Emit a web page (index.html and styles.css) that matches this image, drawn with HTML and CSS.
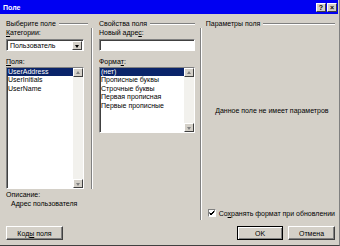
FILE: index.html
```html
<!DOCTYPE html>
<html lang="ru">
<head>
<meta charset="UTF-8">
<title>Поле</title>
<link rel="stylesheet" href="styles.css">
</head>
<body>
<div class="window">
  <div class="titlebar">
    <span class="title">Поле</span>
    <span class="tbtn">?</span>
    <span class="tbtn">×</span>
  </div>
  <div class="panes">
    <div class="pane pane-fields">
      <div class="group">Выберите поле</div>
      <div class="pick">
        <div class="label"><u>К</u>атегории:</div>
        <div class="select"><span class="value">Пользователь</span><span class="drop"></span></div>
        <div class="label spaced"><u>П</u>оля:</div>
        <div class="listbox fields">
          <ul class="items">
            <li class="sel">UserAddress</li>
            <li>UserInitials</li>
            <li>UserName</li>
          </ul>
          <div class="scroll"><span class="arrow up"></span><span class="track"></span><span class="arrow down"></span></div>
        </div>
      </div>
      <div class="label">Описание:</div>
      <div class="desc">Адрес пользователя</div>
      <div class="buttons"><button class="btn codes">Код<u>ы</u> поля</button></div>
    </div>

    <div class="pane pane-props">
      <div class="group">Свойства поля</div>
      <div class="label">Новый адре<u>с</u>:</div>
      <div class="input"></div>
      <div class="label spaced">Форма<u>т</u>:</div>
      <div class="listbox formats">
        <ul class="items">
          <li class="sel">(нет)</li>
          <li>Прописные буквы</li>
          <li>Строчные буквы</li>
          <li>Первая прописная</li>
          <li>Первые прописные</li>
        </ul>
        <div class="scroll"><span class="arrow up"></span><span class="track"></span><span class="arrow down"></span></div>
      </div>
    </div>

    <div class="pane pane-params">
      <div class="group">Параметры поля</div>
      <div class="params">
        <div class="empty">Данное поле не имеет параметров</div>
        <label class="check"><span class="box">
          <svg width="6" height="6" viewBox="0 0 6 6"><path d="M0.5 2.5 L2 4 L5.5 0.5 M0.5 3.5 L2 5 L5.5 1.5" stroke="#000" stroke-width="1" fill="none"/></svg>
        </span><span>Со<u>х</u>ранять формат при обновлении</span></label>
      </div>
      <div class="buttons right">
        <button class="btn default">OK</button>
        <button class="btn cancel">Отмена</button>
      </div>
    </div>
  </div>
</div>
</body>
</html>
```

FILE: styles.css
```css
* {
    box-sizing: border-box;
}

body {
    margin: 0;
    font-family: "Liberation Sans", Arial, sans-serif;
    font-size: 7px;
    color: #000;
}

.window {
    width: 340px;
    height: 246px;
    background: #d4d0c8;
    border-right: 1px solid #808080;
    border-bottom: 1px solid #404040;
    display: flex;
    flex-direction: column;
}

.titlebar {
    height: 14px;
    margin-right: 1px;
    background: #0000f2;
    display: flex;
    align-items: center;
    gap: 1px;
    padding: 0 1px 0 3px;
}

.title {
    flex: 1;
    color: #fff;
    font-weight: bold;
    font-size: 7px;
}

.tbtn {
    width: 10px;
    height: 9px;
    background: #d4d0c8;
    border: 1px solid;
    border-color: #fff #404040 #404040 #fff;
    font-weight: bold;
    font-size: 7px;
    line-height: 7px;
    text-align: center;
}

.panes {
    flex: 1;
    display: flex;
    padding: 5px 4px 5px 6px;
}

.pane {
    display: flex;
    flex-direction: column;
}

.pane-fields { width: 87px; }
.pane-props { width: 98px; margin-left: 6px; }
.pane-params { flex: 1; margin-left: 5px; }

.group {
    display: flex;
    align-items: center;
    gap: 3px;
    height: 9px;
    line-height: 9px;
    white-space: nowrap;
}

.group::after {
    content: "";
    flex: 1;
    border-top: 1px solid #808080;
    border-bottom: 1px solid #fff;
}

.pane-fields .group { margin-right: 5px; }
.pane-params .group { padding-left: 6px; }

.label {
    height: 9px;
    line-height: 9px;
    white-space: nowrap;
}

.label.spaced { margin-top: 6px; }

.pick {
    width: 87px;
    padding-right: 6px;
    border-right: 1px solid #fff;
    box-shadow: inset -1px 0 0 #808080;
}

.select,
.input,
.listbox {
    background: #fff;
    border: 1px solid;
    border-color: #808080 #fff #fff #808080;
    box-shadow: inset 1px 1px 0 #404040;
}

.select {
    margin-top: 2px;
    width: 78px;
    height: 12px;
    display: flex;
    align-items: center;
    padding: 0 1px 0 3px;
}

.select .value { flex: 1; }

.drop {
    width: 10px;
    height: 9px;
    background: #d4d0c8;
    border: 1px solid;
    border-color: #fff #404040 #404040 #fff;
    position: relative;
}

.drop::after {
    content: "";
    position: absolute;
    left: 2px;
    top: 3px;
    border-left: 2.5px solid transparent;
    border-right: 2.5px solid transparent;
    border-top: 3px solid #000;
}

.input {
    margin-top: 2px;
    height: 12px;
}

.listbox {
    margin-top: 1px;
    display: flex;
}

.listbox.fields { width: 78px; height: 122px; }
.listbox.formats { height: 66px; }

.items {
    flex: 1;
    list-style: none;
    margin: 0;
    padding: 0;
}

.items li {
    height: 8.4px;
    line-height: 8.4px;
    padding-left: 1px;
    white-space: nowrap;
}

.items li.sel {
    background: #0a246a;
    color: #fff;
}

.scroll {
    width: 10px;
    display: flex;
    flex-direction: column;
}

.track {
    flex: 1;
    background: #f2f1ed;
}

.arrow {
    height: 9px;
    background: #d4d0c8;
    border: 1px solid;
    border-color: #fff #404040 #404040 #fff;
    position: relative;
}

.arrow::after {
    content: "";
    position: absolute;
    left: 2px;
    border-left: 2.5px solid transparent;
    border-right: 2.5px solid transparent;
}

.arrow.up::after {
    top: 2px;
    border-bottom: 3px solid #808080;
}

.arrow.down::after {
    top: 3px;
    border-top: 3px solid #808080;
}

.pane-fields > .label { margin-top: 1px; }

.desc {
    height: 9px;
    line-height: 9px;
    padding-left: 5px;
}

.buttons {
    margin-top: auto;
    display: flex;
    gap: 5px;
}

.buttons.right {
    justify-content: flex-end;
    margin-top: 6px;
}

.btn {
    height: 14px;
    padding: 0;
    font-family: inherit;
    font-size: 7px;
    color: #000;
    background: #d4d0c8;
    border: 1px solid;
    border-color: #fff #404040 #404040 #fff;
    box-shadow: inset -1px -1px 0 #808080;
}

.btn.codes { width: 57px; }
.btn.cancel { width: 47px; }

.btn.default {
    width: 46px;
    border: 1px solid #000;
    box-shadow: inset 1px 1px 0 #fff, inset -1px -1px 0 #808080;
}

.params {
    flex: 1;
    display: flex;
    flex-direction: column;
    border-left: 1px solid #808080;
    box-shadow: inset 1px 0 0 #fff;
    padding: 0 0 3px 6px;
}

.empty {
    margin-top: 78px;
    height: 9px;
    line-height: 9px;
    text-align: center;
    padding-left: 2px;
}

.check {
    margin-top: auto;
    display: flex;
    align-items: center;
    gap: 3px;
    padding-left: 1px;
    white-space: nowrap;
}

.box {
    width: 8px;
    height: 8px;
    background: #fff;
    border: 1px solid;
    border-color: #808080 #fff #fff #808080;
    display: flex;
    align-items: center;
    justify-content: center;
}
```
